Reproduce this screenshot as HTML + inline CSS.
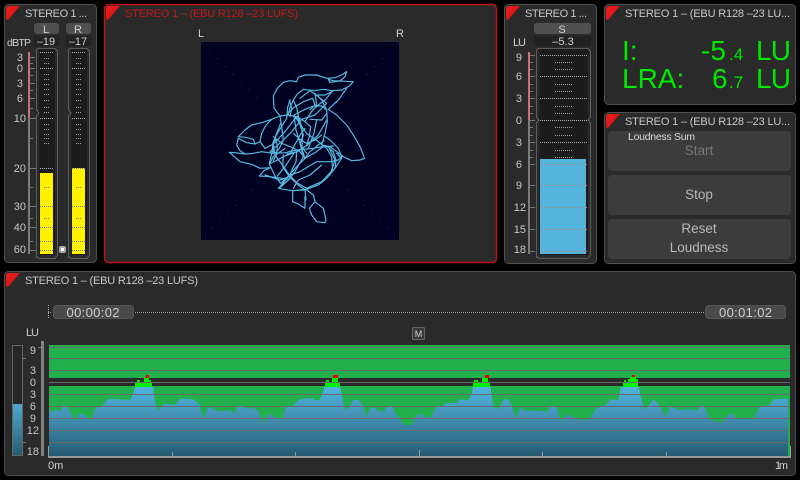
<!DOCTYPE html>
<html><head><meta charset="utf-8"><style>
html,body{margin:0;padding:0;background:#000;width:800px;height:480px;overflow:hidden}
svg{display:block}
text{font-family:"Liberation Sans","DejaVu Sans",sans-serif;fill:#cfcfcf}
.h{font-size:11px;fill:#c8c8c8}
.s{font-size:11px;fill:#c8c8c8;text-anchor:end}
.g{font-size:28px;fill:#00e800}
.gs{font-size:17px;fill:#00e800}
.c{text-anchor:middle}
.r rect,.c2{shape-rendering:crispEdges}
.dM{stroke:#b0b0b0;stroke-width:1;stroke-dasharray:1 1;shape-rendering:crispEdges;fill:none}
.dm{stroke:#a0a0a0;stroke-width:1;stroke-dasharray:1 1;shape-rendering:crispEdges;fill:none}
.dY{stroke:#7a7ac0;stroke-width:1;stroke-dasharray:1 1;shape-rendering:crispEdges;fill:none}
.dB{stroke:#a88a7c;stroke-width:1;stroke-dasharray:1 1;shape-rendering:crispEdges;fill:none}
.o{fill:none;stroke:#5c5c5c;stroke-width:1;shape-rendering:crispEdges}
.t{stroke:#777;stroke-width:1;shape-rendering:crispEdges}
</style></head><body>
<svg width="800" height="480" viewBox="0 0 800 480" xmlns="http://www.w3.org/2000/svg">
<defs>
<linearGradient id="blue" gradientUnits="userSpaceOnUse" x1="0" y1="387" x2="0" y2="456"><stop offset="0" stop-color="#4fb3de"/><stop offset=".45" stop-color="#4290b2"/><stop offset="1" stop-color="#245a72"/></linearGradient>
<linearGradient id="blue2" gradientUnits="userSpaceOnUse" x1="0" y1="404" x2="0" y2="456"><stop offset="0" stop-color="#4fa9d0"/><stop offset="1" stop-color="#245a72"/></linearGradient>
<linearGradient id="tri" x1="0" y1="0" x2="1" y2="1"><stop offset="0" stop-color="#f02020"/><stop offset="1" stop-color="#c80c0c"/></linearGradient>
<clipPath id="sil">
<polygon transform="translate(0,370) scale(.33333)" points="147,258 147,112 155,128 165,120 185,122 188,106 200,108 215,135 225,155 235,132 250,132 265,145 275,145 288,112 305,112 320,90 330,86 390,90 400,70 405,50 460,50 465,95 475,122 495,100 525,105 540,85 580,88 600,105 603,258"/>
<polygon transform="translate(200,340) scale(.33333)" points="0,348 0,205 13,235 22,203 35,203 50,213 70,213 90,210 103,222 115,197 125,197 135,205 165,205 175,215 190,248 203,223 215,225 235,237 245,235 258,202 280,197 295,180 312,175 340,175 345,180 358,180 368,160 375,130 418,130 423,150 428,180 437,210 445,205 460,180 475,180 490,200 500,232 510,205 520,202 540,215 553,213 560,200 575,198 590,225 600,240 615,255 635,255 650,225 665,222 680,233 692,233 708,202 730,197 735,190 770,188 780,178 805,180 815,160 822,130 870,130 875,165 882,205 903,205 903,348"/>
<polygon transform="translate(500,340) scale(.33333)" points="0,348 0,198 12,178 25,178 38,205 47,235 60,202 75,212 95,212 130,213 140,218 152,200 170,202 183,243 205,222 230,238 265,240 290,205 318,195 330,178 355,180 362,140 370,130 415,130 420,160 425,180 433,210 462,178 480,200 497,230 510,200 522,203 535,210 580,208 590,215 605,195 612,198 630,240 665,248 685,225 700,222 705,232 760,238 780,200 810,195 820,178 862,176 864,176 864,348"/>
</clipPath>
</defs>
<rect width="800" height="480" fill="#000"/>

<!-- panels -->
<rect x="4.5" y="4.5" width="92" height="258" rx="4" fill="#2a2a2a" stroke="#505050"/>
<rect x="104.5" y="4.5" width="392" height="258" rx="4" fill="#2a2a2a" stroke="#c01212" stroke-width="1.4"/>
<rect x="504.5" y="4.5" width="92" height="259" rx="4" fill="#2a2a2a" stroke="#505050"/>
<rect x="604.5" y="4.5" width="191" height="100" rx="4" fill="#2a2a2a" stroke="#505050"/>
<rect x="604.5" y="112.5" width="191" height="151" rx="4" fill="#2a2a2a" stroke="#505050"/>
<rect x="4.5" y="271.5" width="791" height="204" rx="4" fill="#2a2a2a" stroke="#505050"/>

<!-- triangles -->
<path d="M6,9 Q6,6 9,6 H20 L8,20 Q6,20 6,18Z" fill="url(#tri)"/>
<path d="M106,9 Q106,6 109,6 H120 L108,20 Q106,20 106,18Z" fill="url(#tri)"/>
<path d="M506,9 Q506,6 509,6 H520 L508,20 Q506,20 506,18Z" fill="url(#tri)"/>
<path d="M606,9 Q606,6 609,6 H620 L608,20 Q606,20 606,18Z" fill="url(#tri)"/>
<path d="M606,117 Q606,114 609,114 H620 L608,128 Q606,128 606,126Z" fill="url(#tri)"/>
<path d="M6,276 Q6,273 9,273 H20 L8,287 Q6,287 6,285Z" fill="url(#tri)"/>

<!-- titles -->
<text class="h" x="25" y="17" textLength="62">STEREO 1 ...</text>
<text class="h" x="125" y="17" textLength="173" style="fill:#c01818">STEREO 1 – (EBU R128 –23 LUFS)</text>
<text class="h" x="525" y="17" textLength="62">STEREO 1 ...</text>
<text class="h" x="625" y="17" textLength="165">STEREO 1 – (EBU R128 –23 LU...</text>
<text class="h" x="625" y="125" textLength="165">STEREO 1 – (EBU R128 –23 LU...</text>
<text class="h" x="25" y="284" textLength="173">STEREO 1 – (EBU R128 –23 LUFS)</text>

<!-- Panel 1 -->
<g class="r">
<rect x="34" y="23" width="25" height="11" rx="3" fill="#505050"/>
<rect x="66" y="23" width="25" height="11" rx="3" fill="#505050"/>
<rect x="34" y="36" width="25" height="10" fill="#222"/>
<rect x="66" y="36" width="25" height="10" fill="#222"/>
<rect x="39" y="49" width="16" height="206" fill="#1c1c1c"/>
<rect x="71" y="49" width="16" height="206" fill="#1c1c1c"/>
<rect x="28" y="52" width="2" height="66" fill="#c87272"/>
<rect x="28" y="118" width="2" height="136" fill="#7c7c7c"/>
<rect x="40" y="173" width="13" height="81" fill="#fff200"/>
<rect x="72" y="168" width="13" height="86" fill="#fff200"/>
</g>
<text class="c" x="46" y="33" style="font-size:11px">L</text>
<text class="c" x="78" y="33" style="font-size:11px">R</text>
<text class="c" x="46" y="45" style="font-size:11px">–19</text>
<text class="c" x="78" y="45" style="font-size:11px">–17</text>
<text x="7" y="46" style="font-size:10.5px" textLength="24">dBTP</text>
<g>
<text class="s" x="23" y="61">3</text><text class="s" x="23" y="72">0</text><text class="s" x="23" y="87">3</text><text class="s" x="23" y="102">6</text><text class="s" x="26" y="122">10</text><text class="s" x="26" y="172">20</text><text class="s" x="26" y="210">30</text><text class="s" x="26" y="231">40</text><text class="s" x="26" y="253">60</text>
</g>
<path class="t" d="M30,57.5h5M30,63.5h3M30,68.5h5M30,75.5h3M30,83.5h5M30,90.5h3M30,98.5h5M30,108.5h3M30,118.5h6M30,138.5h3M30,168.5h6M30,187.5h3M30,206.5h6M30,218.5h3M30,227.5h6M30,241.5h3M30,250.5h6"/>
<path class="o" d="M36.5,258 V116 L39,113 L36.5,110 V50 L38,48.5 H55 L57.5,51 V255 L55,258.5 H39 L36.5,256"/>
<path class="o" d="M68.5,258 V116 L71,113 L68.5,110 V50 L70,48.5 H87 L89.5,51 V255 L87,258.5 H71 L68.5,256"/>
<path class="dM" d="M40,52.5h14M40,68.5h14M40,118.5h14M72,52.5h14M72,68.5h14M72,118.5h14M40,168.5h14"/>
<path class="dm" d="M44,58.5h6M44,63.5h6M44,74.5h6M44,79.5h6M44,84.5h6M44,89.5h6M44,94.5h6M44,100.5h6M44,107.5h6M44,112.5h6M44,124.5h6M44,129.5h6M44,134.5h6M44,138.5h6M44,143.5h6M76,58.5h6M76,63.5h6M76,74.5h6M76,79.5h6M76,84.5h6M76,89.5h6M76,94.5h6M76,100.5h6M76,107.5h6M76,112.5h6M76,124.5h6M76,129.5h6M76,134.5h6M76,138.5h6M76,143.5h6"/>
<path class="dY" d="M40,206.5h13M40,227.5h13M40,241.5h13M40,250.5h13M72,168.5h13M72,206.5h13M72,227.5h13M72,241.5h13M72,250.5h13M44,187.5h6M44,218.5h6M76,187.5h6M76,218.5h6"/>
<rect x="59" y="246" width="7" height="7" rx="2" fill="#a8a8a8"/><rect x="61" y="248" width="3" height="3" fill="#fff"/>

<!-- Goniometer -->
<text x="198" y="37" style="font-size:11px">L</text>
<text x="396" y="37" style="font-size:11px">R</text>
<rect x="201" y="42" width="198" height="198" fill="#000020" class="c2"/>
<path d="M202,43 L398,239 M398,43 L202,239" stroke="#1a1aa8" stroke-width="1" stroke-dasharray="1 9.9" fill="none" class="c2"/>
<g transform="translate(190,20) scale(.33333)" fill="none" stroke="#5ab8de" stroke-width="3.6" stroke-linejoin="round" stroke-linecap="round">
<path d="M268,285 252,265 250,228 262,205 280,187 300,182 320,185 325,172 345,165 380,165 410,175 435,173 455,165 470,155 465,170 450,183 420,187 415,178 430,182 490,185 478,198 455,210 425,212 400,208 372,212 340,208 322,222 310,240 300,262 295,282"/>
<path d="M470,205 445,240 415,268 440,285 470,315 490,345 510,380 524,415 510,420 485,422 460,410 440,395 420,380 395,375 405,340 412,305 410,270 395,240 380,225 405,225 428,214"/>
<path d="M145,350 165,330 185,315 215,308 245,298 270,288 295,285 320,290 345,305 368,270 385,255 405,240 425,216"/>
<path d="M145,350 165,352 190,358 195,372 170,368 145,355 140,375 150,392 165,402 135,398 118,397 135,412 150,425 185,433 210,445 240,443 222,452 208,468 240,470 298,478 280,492 265,505 305,512 345,510 385,495 410,475 435,445 455,415 440,400"/>
<path d="M308,512 308,545 325,552 345,565 345,530 M350,510 370,525 375,545 358,565 365,585 380,605 405,608 408,600 400,565 375,545"/>
<path d="M165,402 190,400 215,395 250,400 285,398 320,390 370,385 410,378 430,395 438,420 435,445"/>
<path d="M195,372 210,365 215,340 228,315 245,298 M210,365 225,385 250,372 262,360 285,335 312,300 325,288"/>
<path d="M310,240 320,262 325,290 335,320 338,350 335,385 345,415 360,395 385,375 402,362 M345,415 320,440 298,465 270,500"/>
<path d="M300,240 293,262 290,295 262,340 250,365 245,400 238,432 255,468 272,490 300,465 330,455 355,440 380,425 420,425 445,420 455,410 445,385 420,360 405,350"/>
<path d="M272,310 258,345 250,375 255,405 275,432 298,465 320,488 350,505 395,485 428,450 425,410 410,385 385,365 350,340 332,315 312,285"/>
<path d="M375,220 380,255 345,268 312,285 318,330 330,370 340,410 315,455 295,480 268,505"/>
<path d="M330,235 360,212 385,230 410,250 375,285 335,298 305,335 275,365 240,395"/>
<path d="M250,350 275,370 305,382 330,395 345,415 375,398 400,380 430,378"/>
<path d="M238,432 262,420 285,408 320,395 318,425 308,445 298,470 270,480 225,465"/>
<path d="M280,405 278,440 298,470 325,495 345,510 348,540"/>
<path d="M360,298 395,300 410,280 M310,340 330,358 350,370 375,360 395,345 M322,290 340,345 330,372 350,400 M380,300 372,340 355,385"/>
<path d="M298,240 305,265 300,290 M270,288 275,320 280,360 268,385 255,400 M345,305 362,320 358,350 350,375 M410,300 385,345 352,375 322,395 290,402"/>
<path d="M300,402 330,345 345,325 M238,432 250,410 285,385 M262,468 285,440 312,400 M310,505 325,480 360,465 395,435 M418,385 435,420 420,465 M310,512 350,508"/>
<path d="M250,400 248,372 255,355 262,375 260,402 250,422 M360,270 372,258 395,258 410,270 M292,282 312,262 340,245 368,235 376,258"/>
</g>

<!-- Panel 3 -->
<g class="r">
<rect x="534" y="23" width="57" height="11" rx="3" fill="#505050"/>
<rect x="534" y="36" width="57" height="10" fill="#222"/>
<rect x="539" y="49" width="49" height="206" fill="#1c1c1c"/>
<rect x="528" y="52" width="2" height="68" fill="#c87272"/>
<rect x="528" y="120" width="2" height="134" fill="#7c7c7c"/>
<rect x="540" y="159" width="46" height="95" fill="#55b4de"/>
</g>
<text class="c" x="562" y="33" style="font-size:11px">S</text>
<text class="c" x="563" y="45" style="font-size:11px">–5.3</text>
<text x="513" y="46" style="font-size:11px" textLength="13">LU</text>
<text class="s" x="522" y="61">9</text><text class="s" x="522" y="80">6</text><text class="s" x="522" y="102">3</text><text class="s" x="522" y="124">0</text><text class="s" x="522" y="146">3</text><text class="s" x="522" y="168">6</text><text class="s" x="522" y="189">9</text><text class="s" x="526" y="211">12</text><text class="s" x="526" y="233">15</text><text class="s" x="526" y="253">18</text>
<path class="t" d="M530,55.5h5M530,62.5h3M530,69.5h3M530,76.5h5M530,84.5h3M530,91.5h3M530,98.5h5M530,106.5h3M530,113.5h3M530,120.5h5M530,127.5h3M530,135.5h3M530,142.5h5M530,150.5h3M530,157.5h3M530,164.5h5M530,185.5h5M530,207.5h5M530,229.5h5M530,251.5h5"/>
<path class="o" d="M536.5,258 V123 L539,120 L536.5,117 V50 L538,48.5 H588 L590.5,51 V117 L588,120 L590.5,123 V255 L588,258.5 H539 L536.5,256"/>
<path class="dM" d="M540,55.5h47M540,76.5h47M540,98.5h47M540,120.5h47M540,142.5h47"/>
<path class="dm" d="M555,62.5h18M555,69.5h18M555,84.5h18M555,91.5h18M555,106.5h18M555,113.5h18M555,127.5h18M555,135.5h18M555,150.5h18M555,157.5h18"/>
<path class="dB" d="M540,164.5h47M540,185.5h47M540,207.5h47M540,229.5h47M540,251.5h47"/>

<!-- Panel 4 -->
<text class="g" x="622" y="60">I:</text>
<text class="g" x="701" y="60">-5</text>
<text class="gs" x="729" y="60">.4</text>
<text class="g" x="756" y="60" textLength="35">LU</text>
<text class="g" x="622" y="88">LRA:</text>
<text class="g" x="712" y="88">6</text>
<text class="gs" x="729" y="88">.7</text>
<text class="g" x="756" y="88" textLength="35">LU</text>

<!-- Panel 5 -->
<rect x="608" y="131" width="183" height="40" rx="4" fill="#3c3c3c"/>
<rect x="608" y="175" width="183" height="40" rx="4" fill="#3c3c3c"/>
<rect x="608" y="219" width="183" height="40" rx="4" fill="#3c3c3c"/>
<text x="628" y="140" style="font-size:10.5px;fill:#d8d8d8" textLength="67">Loudness Sum</text>
<text class="c" x="699" y="155" style="font-size:13.5px;fill:#787878">Start</text>
<text class="c" x="699" y="199" style="font-size:13.5px;fill:#b8b8b8">Stop</text>
<text class="c" x="699" y="233" style="font-size:13.5px;fill:#b8b8b8">Reset</text>
<text class="c" x="699" y="252" style="font-size:13.5px;fill:#b8b8b8">Loudness</text>

<!-- Panel 6 timeline -->
<rect x="53.5" y="305.5" width="80" height="13" rx="3" fill="#4a4a4a" stroke="#555"/>
<rect x="705.5" y="305.5" width="80" height="13" rx="3" fill="#4a4a4a" stroke="#555"/>
<text x="66.5" y="317" style="font-size:13px" textLength="53">00:00:02</text>
<text x="719" y="317" style="font-size:13px" textLength="53">00:01:02</text>
<path class="dm" d="M135,312.5h570M48.5,305v14M48,312.5h3"/>
<rect x="412.5" y="327.5" width="12" height="12" rx="1" fill="#3a3a3a" stroke="#666"/>
<text class="c" x="418.5" y="337" style="font-size:9px">M</text>
<text x="26" y="336" style="font-size:11px" textLength="13">LU</text>

<!-- left mini meter -->
<g class="r">
<rect x="12" y="345" width="11" height="111" fill="#666"/>
<rect x="13" y="346" width="9" height="109" fill="#262626"/>
<rect x="13" y="404" width="9" height="51" fill="url(#blue2)"/>
<rect x="41" y="341" width="3" height="115" fill="#808080"/>
</g>
<path class="t" d="M23,358.5h3M23,442.5h3M38,347.5h3"/>
<text class="s" x="36" y="354">9</text><text class="s" x="36" y="374">3</text><text class="s" x="36" y="386">0</text><text class="s" x="36" y="398">3</text><text class="s" x="36" y="410">6</text><text class="s" x="36" y="422">9</text><text class="s" x="39" y="434">12</text><text class="s" x="39" y="455">18</text>

<!-- waveform -->
<g class="r">
<rect x="49" y="345" width="741" height="33" fill="#21b04b"/>
<rect x="49" y="386" width="741" height="70" fill="#21b04b"/>
</g>
<rect x="49" y="387" width="739" height="69" fill="url(#blue)" clip-path="url(#sil)"/>
<g class="r" fill="#00f000">
<rect x="135" y="383" width="17" height="4"/><rect x="137" y="380" width="3" height="3"/><rect x="144" y="380" width="7" height="3"/><rect x="144" y="378" width="5" height="2"/>
<rect x="325" y="383" width="15" height="4"/><rect x="332" y="378" width="6" height="5"/><rect x="326" y="380" width="3" height="2"/>
<rect x="473" y="383" width="17" height="4"/><rect x="482" y="378" width="6" height="5"/><rect x="474" y="380" width="4" height="2"/>
<rect x="623" y="383" width="15" height="4"/><rect x="628" y="379" width="10" height="4"/><rect x="624" y="380" width="2" height="2"/><rect x="630" y="377" width="6" height="2"/>
</g>
<g class="r" fill="#f00000">
<rect x="146" y="375" width="3" height="2"/><rect x="145" y="377" width="4" height="1"/>
<rect x="333" y="375" width="5" height="3"/>
<rect x="485" y="375" width="4" height="3"/>
<rect x="632" y="375" width="3" height="2"/>
</g>
<g class="r" fill="#6a6a6a">
<rect x="49" y="347" width="741" height="1"/><rect x="49" y="358" width="741" height="1"/><rect x="49" y="370" width="741" height="1"/><rect x="49" y="382" width="741" height="1"/><rect x="49" y="394" width="741" height="1"/><rect x="49" y="406" width="741" height="1"/><rect x="49" y="418" width="741" height="1"/><rect x="49" y="430" width="741" height="1"/><rect x="49" y="442" width="741" height="1"/>
</g>
<g class="r" fill="#999">
<rect x="48" y="456" width="743" height="2"/>
<rect x="48" y="446" width="1" height="12"/><rect x="790" y="446" width="1" height="12"/>
<rect x="172" y="452" width="1" height="4"/><rect x="295" y="452" width="1" height="4"/><rect x="419" y="450" width="1" height="6"/><rect x="542" y="452" width="1" height="4"/><rect x="666" y="452" width="1" height="4"/>
</g>
<text x="48" y="469" style="font-size:11px">0m</text>
<text x="775" y="469" style="font-size:11px" textLength="13">1m</text>
</svg>
</body></html>
